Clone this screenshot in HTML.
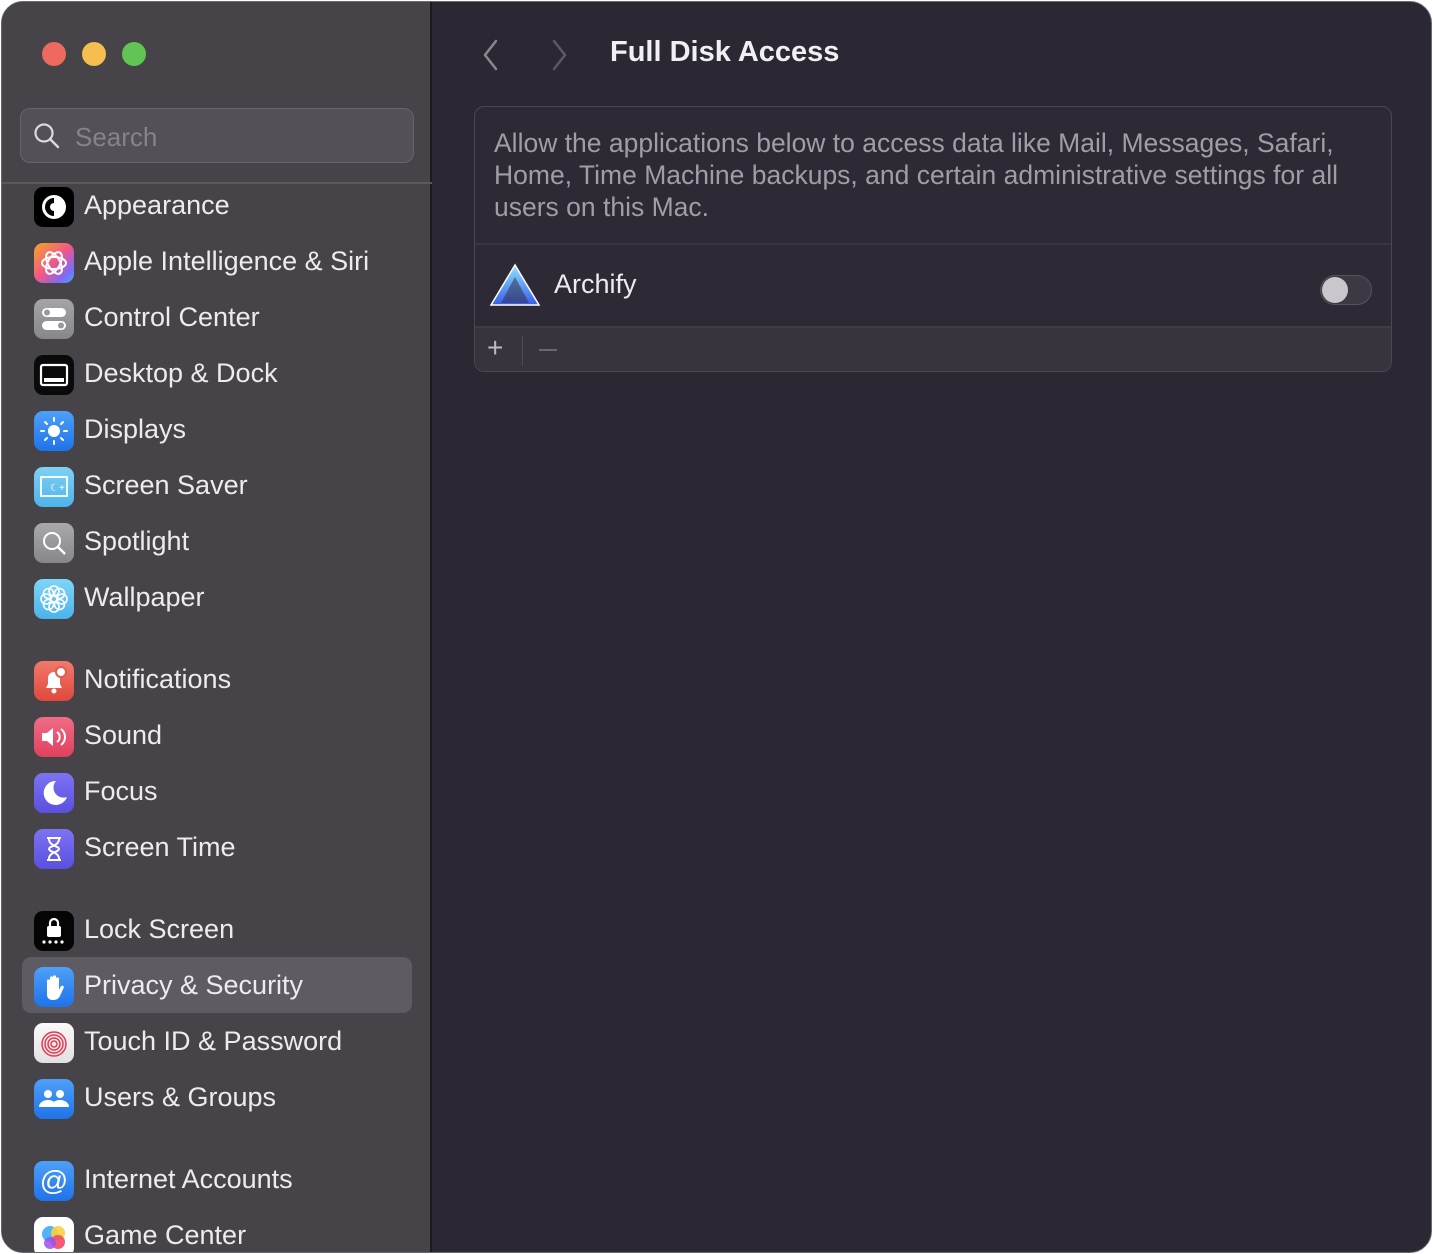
<!DOCTYPE html>
<html><head><meta charset="utf-8"><style>
*{margin:0;padding:0;box-sizing:border-box}
html,body{width:1433px;height:1254px;background:#fff;overflow:hidden;font-family:"Liberation Sans",sans-serif}
.win{position:absolute;left:1px;top:1px;width:1431px;height:1252px;border-radius:22px;overflow:hidden;background:#2c2833;border:1px solid #6a6870}
.side{position:absolute;left:0;top:0;width:430px;height:100%;background:#464349;border-right:2px solid #1c1a1f}
.dot{position:absolute;top:40px;width:24px;height:24px;border-radius:50%}
.search{position:absolute;left:18px;top:106px;width:394px;height:55px;border-radius:10px;background:#535057;border:1px solid #67646b}
.search span{position:absolute;left:54px;top:13px;font-size:26px;color:#86838a}
.sep{position:absolute;left:0;top:180px;width:430px;height:2px;background:#5b585f}
.item{position:absolute;left:32px;height:40px;width:380px}
.item .ic{position:absolute;left:0;top:0;width:40px;height:40px;border-radius:9px;overflow:hidden}
.item .t{position:absolute;left:50px;top:3px;font-size:27px;color:#ecebee;white-space:nowrap}
.sel{position:absolute;left:20px;top:955px;width:390px;height:56px;border-radius:9px;background:#5e5b62}
.main{position:absolute;left:432px;top:0;right:0;height:100%}
.title{position:absolute;left:176px;top:34px;font-size:29px;font-weight:bold;color:#f0eff2}
.panel{position:absolute;left:40px;top:104px;width:918px;height:266px;border:1px solid #4a4750;border-radius:10px;background:#2e2a35;overflow:hidden}
.desc{position:absolute;left:19px;top:20px;width:890px;font-size:26.5px;line-height:32px;color:#a09da5;white-space:nowrap}
.row{position:absolute;left:0;top:136px;width:100%;height:83px;border-top:2px solid #3a3641}
.foot{position:absolute;left:0;top:219px;width:100%;height:47px;background:#37343d;border-top:2px solid #3f3c45}
</style></head><body>
<div class="win">
<div class="side">
<div class="dot" style="left:40px;background:#ec6a5e"></div>
<div class="dot" style="left:80px;background:#f4bf4f"></div>
<div class="dot" style="left:120px;background:#61c554"></div>
<div class="search"><svg style="position:absolute;left:12px;top:13px" width="28" height="28" viewBox="0 0 28 28"><circle cx="11" cy="11" r="8.5" fill="none" stroke="#dcdadf" stroke-width="2.2"/><line x1="17" y1="17" x2="25" y2="25" stroke="#dcdadf" stroke-width="2.4" stroke-linecap="round"/></svg><span>Search</span></div>
<div class="sep"></div>
<div class="sel"></div>

<div class="item" style="top:185px"><div class="ic" style="background:#000"><svg width="40" height="40"><circle cx="20" cy="20" r="12" fill="#fff"/><path d="M20 11a9 9 0 0 0 0 18z" fill="#000"/><circle cx="20" cy="20" r="4" fill="#fff"/></svg></div><div class="t">Appearance</div></div>
<div class="item" style="top:241px"><div class="ic" style="background:linear-gradient(135deg,#f5a623,#f0568a 50%,#7b6cf6 80%,#4aa8f2)"><svg width="40" height="40"><g fill="none" stroke="#fff" stroke-width="2"><ellipse cx="20" cy="20" rx="12" ry="6"/><ellipse cx="20" cy="20" rx="12" ry="6" transform="rotate(60 20 20)"/><ellipse cx="20" cy="20" rx="12" ry="6" transform="rotate(120 20 20)"/></g></svg></div><div class="t">Apple Intelligence &amp; Siri</div></div>
<div class="item" style="top:297px"><div class="ic" style="background:linear-gradient(#a5a4a9,#87868b)"><svg width="40" height="40"><rect x="8" y="9" width="24" height="9" rx="4.5" fill="#fff"/><circle cx="13" cy="13.5" r="3" fill="#999"/><rect x="8" y="22" width="24" height="9" rx="4.5" fill="#fff"/><circle cx="27" cy="26.5" r="3" fill="#999"/></svg></div><div class="t">Control Center</div></div>
<div class="item" style="top:353px"><div class="ic" style="background:#0a0a0a"><svg width="40" height="40"><rect x="7" y="10" width="26" height="20" rx="2" fill="none" stroke="#fff" stroke-width="2.2"/><rect x="10" y="23" width="20" height="4" fill="#fff"/></svg></div><div class="t">Desktop &amp; Dock</div></div>
<div class="item" style="top:409px"><div class="ic" style="background:linear-gradient(#4ea0f7,#1f73ea)"><svg width="40" height="40"><circle cx="20" cy="20" r="6" fill="#fff"/><g stroke="#fff" stroke-width="2" stroke-linecap="round"><line x1="20" y1="7" x2="20" y2="10"/><line x1="20" y1="30" x2="20" y2="33"/><line x1="7" y1="20" x2="10" y2="20"/><line x1="30" y1="20" x2="33" y2="20"/><line x1="11" y1="11" x2="13" y2="13"/><line x1="27" y1="27" x2="29" y2="29"/><line x1="11" y1="29" x2="13" y2="27"/><line x1="27" y1="13" x2="29" y2="11"/></g></svg></div><div class="t">Displays</div></div>
<div class="item" style="top:465px"><div class="ic" style="background:linear-gradient(#7fd0f5,#4eb4ea)"><svg width="40" height="40"><rect x="7" y="10" width="26" height="19" fill="none" stroke="#fff" stroke-width="1.8"/><text x="16" y="24" font-size="10" fill="#fff" font-family="Liberation Sans">☾+</text></svg></div><div class="t">Screen Saver</div></div>
<div class="item" style="top:521px"><div class="ic" style="background:linear-gradient(#a9a8ad,#87868b)"><svg width="40" height="40"><circle cx="18" cy="18" r="8" fill="none" stroke="#fff" stroke-width="2"/><line x1="24" y1="24" x2="31" y2="31" stroke="#fff" stroke-width="2.4"/></svg></div><div class="t">Spotlight</div></div>
<div class="item" style="top:577px"><div class="ic" style="background:linear-gradient(#7fd6f7,#4ab3ea)"><svg width="40" height="40"><g fill="none" stroke="#fff" stroke-width="1.6"><circle cx="20" cy="12" r="5"/><circle cx="20" cy="28" r="5"/><circle cx="12" cy="20" r="5"/><circle cx="28" cy="20" r="5"/><circle cx="14.5" cy="14.5" r="5"/><circle cx="25.5" cy="25.5" r="5"/><circle cx="14.5" cy="25.5" r="5"/><circle cx="25.5" cy="14.5" r="5"/></g></svg></div><div class="t">Wallpaper</div></div>

<div class="item" style="top:659px"><div class="ic" style="background:linear-gradient(#f07a6c,#e0483d)"><svg width="40" height="40"><path d="M12 27h16l-2-4v-6a6 6 0 0 0-12 0v6z" fill="#fff"/><circle cx="20" cy="30" r="2.5" fill="#fff"/><circle cx="27" cy="11" r="5" fill="#fff" stroke="#e65a4d" stroke-width="2"/></svg></div><div class="t">Notifications</div></div>
<div class="item" style="top:715px"><div class="ic" style="background:linear-gradient(#f06c86,#e0415e)"><svg width="40" height="40"><path d="M8 16h5l6-5v18l-6-5H8z" fill="#fff"/><g fill="none" stroke="#fff" stroke-width="2"><path d="M23 15a6 6 0 0 1 0 10"/><path d="M27 12a10 10 0 0 1 0 16"/></g></svg></div><div class="t">Sound</div></div>
<div class="item" style="top:771px"><div class="ic" style="background:linear-gradient(#7c74f2,#5a4fe0)"><svg width="40" height="40"><path d="M22 8a12 12 0 1 0 11 16A10 10 0 0 1 22 8z" fill="#fff"/></svg></div><div class="t">Focus</div></div>
<div class="item" style="top:827px"><div class="ic" style="background:linear-gradient(#7c74f2,#5a4fe0)"><svg width="40" height="40"><path d="M13 9h14M13 31h14M15 10c0 7 10 7 10 10s-10 3-10 10M25 10c0 7-10 7-10 10s10 3 10 10" fill="none" stroke="#fff" stroke-width="2"/></svg></div><div class="t">Screen Time</div></div>

<div class="item" style="top:909px"><div class="ic" style="background:#050505"><svg width="40" height="40"><rect x="13" y="15" width="14" height="11" rx="2" fill="#fff"/><path d="M16 16v-4a4 4 0 0 1 8 0v4" fill="none" stroke="#fff" stroke-width="2.2"/><g fill="#fff"><circle cx="10" cy="31" r="1.6"/><circle cx="16" cy="31" r="1.6"/><circle cx="22" cy="31" r="1.6"/><circle cx="28" cy="31" r="1.6"/></g></svg></div><div class="t">Lock Screen</div></div>
<div class="item" style="top:965px"><div class="ic" style="background:linear-gradient(#4ea0f7,#1f73ea)"><svg width="40" height="40"><path d="M13 22V13a2 2 0 0 1 3 0v7V10a2 2 0 0 1 3 0v10V9a2 2 0 0 1 3 0v11V11a2 2 0 0 1 3 0v12l2-4a2 2 0 0 1 3 1l-4 9a7 7 0 0 1-6 4h-2a5 5 0 0 1-5-5z" fill="#fff"/></svg></div><div class="t">Privacy &amp; Security</div></div>
<div class="item" style="top:1021px"><div class="ic" style="background:linear-gradient(#fafafa,#e1e1e4)"><svg width="40" height="40"><g fill="none" stroke="#e8384f" stroke-width="1.5"><circle cx="20" cy="21" r="3"/><circle cx="20" cy="21" r="6"/><circle cx="20" cy="21" r="9"/><circle cx="20" cy="21" r="12"/></g></svg></div><div class="t">Touch ID &amp; Password</div></div>
<div class="item" style="top:1077px"><div class="ic" style="background:linear-gradient(#4ea0f7,#1f73ea)"><svg width="40" height="40"><circle cx="14" cy="15" r="4" fill="#fff"/><circle cx="26" cy="15" r="4" fill="#fff"/><path d="M5 28a9 7 0 0 1 18 0zM17 28a9 7 0 0 1 18 0z" fill="#fff"/></svg></div><div class="t">Users &amp; Groups</div></div>

<div class="item" style="top:1159px"><div class="ic" style="background:linear-gradient(#4ea0f7,#1f73ea)"><svg width="40" height="40"><text x="20" y="29" text-anchor="middle" font-size="28" fill="#fff" font-family="Liberation Sans">@</text></svg></div><div class="t">Internet Accounts</div></div>
<div class="item" style="top:1215px"><div class="ic" style="background:#fff"><svg width="40" height="40"><circle cx="16" cy="17" r="8" fill="#4fb5f5"/><circle cx="24" cy="16" r="7" fill="#f7d13d" opacity=".9"/><circle cx="24" cy="25" r="7" fill="#f24a6a" opacity=".9"/><circle cx="16" cy="26" r="6" fill="#9b51f0" opacity=".85"/></svg></div><div class="t">Game Center</div></div>
</div>

<div class="main">
<svg style="position:absolute;left:44px;top:36px" width="24" height="34"><path d="M18 3L7 17l11 14" fill="none" stroke="#8a878f" stroke-width="2.5" stroke-linecap="round"/></svg>
<svg style="position:absolute;left:114px;top:36px" width="24" height="34"><path d="M6 3l11 14L6 31" fill="none" stroke="#5c5962" stroke-width="2.5" stroke-linecap="round"/></svg>
<div class="title">Full Disk Access</div>
<div class="panel">
<div class="desc">Allow the applications below to access data like Mail, Messages, Safari,<br>Home, Time Machine backups, and certain administrative settings for all<br>users on this Mac.</div>
<div class="row">
<svg style="position:absolute;left:14px;top:18px" width="52" height="46"><defs><linearGradient id="g" x1="0" y1="0" x2="0" y2="1"><stop offset="0" stop-color="#8fe3ff"/><stop offset="1" stop-color="#3a5de8"/></linearGradient></defs><path d="M26 2L2 42h48z" fill="url(#g)" stroke="#fff" stroke-width="1.5"/><path d="M26 14L12 40h28z" fill="#2e2a35" opacity=".5"/></svg>
<div style="position:absolute;left:79px;top:24px;font-size:27px;color:#ecebee">Archify</div>
<div style="position:absolute;left:845px;top:30px;width:52px;height:30px;border-radius:15px;background:#3c3944;border:1px solid #55525c"><div style="position:absolute;left:1px;top:1px;width:26px;height:26px;border-radius:50%;background:#c9c7cc"></div></div>
</div>
<div class="foot">
<div style="position:absolute;left:12px;top:4px;font-size:28px;color:#bdbbc1">+</div>
<div style="position:absolute;left:47px;top:8px;width:1px;height:30px;background:#4e4b55"></div>
<div style="position:absolute;left:64px;top:21px;width:18px;height:2px;background:#6b6871"></div>
</div>
</div>
</div>
</div>
</body></html>
